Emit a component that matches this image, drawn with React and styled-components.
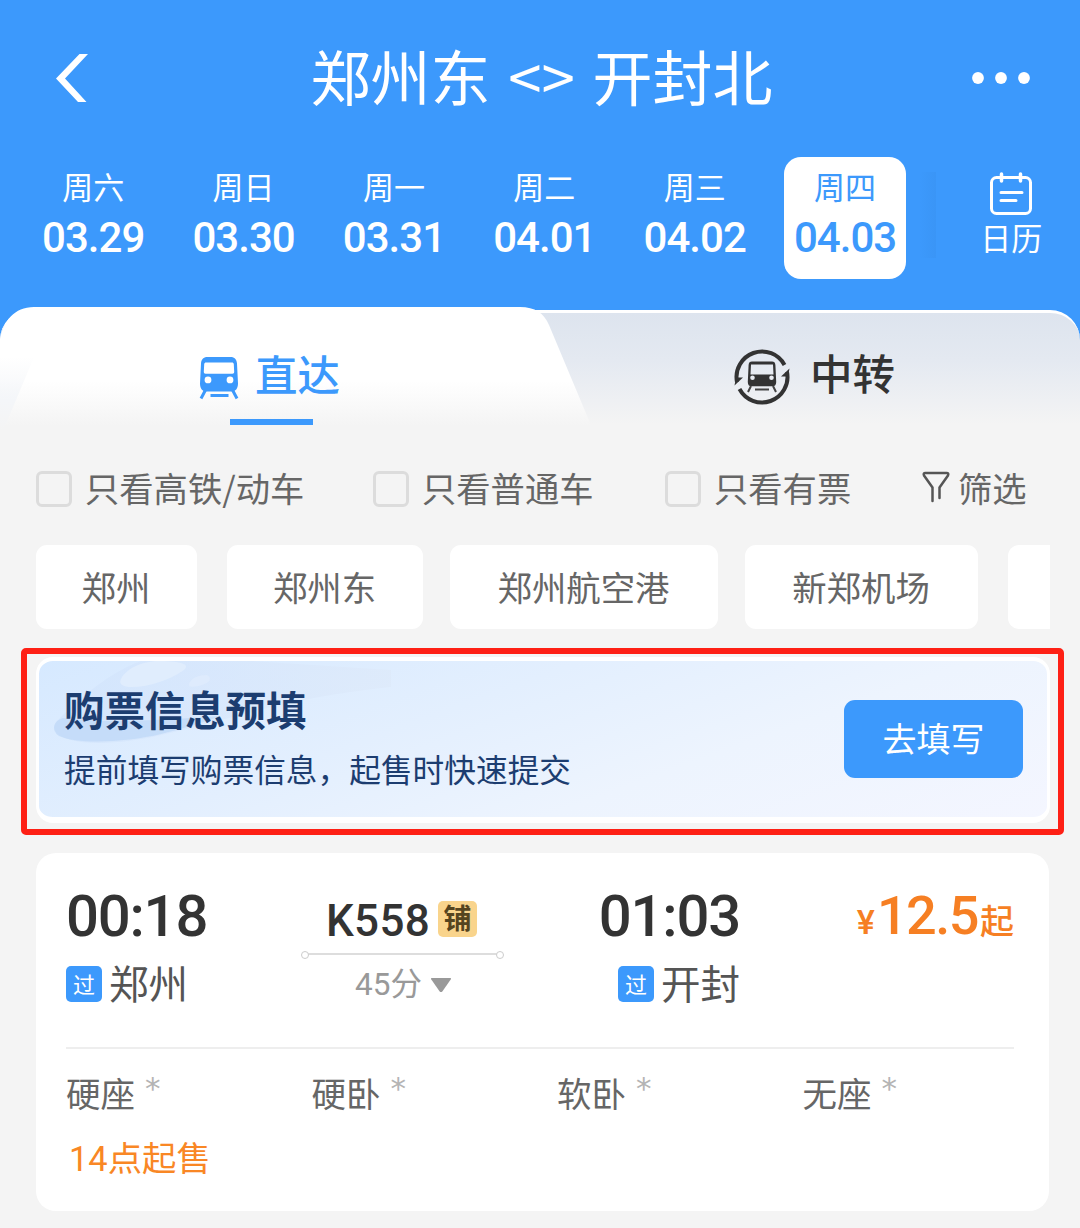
import React, { useState } from "react";
import styled, { createGlobalStyle } from "styled-components";

const days = [
  { week: "周六", date: "03.29" },
  { week: "周日", date: "03.30" },
  { week: "周一", date: "03.31" },
  { week: "周二", date: "04.01" },
  { week: "周三", date: "04.02" },
  { week: "周四", date: "04.03" },
];

const filters = [
  { label: "只看高铁/动车", width: 337 },
  { label: "只看普通车", width: 292 },
  { label: "只看有票", width: 257 },
];

const stations = [
  { name: "郑州", width: 161, gap: 30 },
  { name: "郑州东", width: 196, gap: 27 },
  { name: "郑州航空港", width: 268, gap: 27 },
  { name: "新郑机场", width: 233, gap: 30 },
  { name: "", width: 161, gap: 0 },
];

const seats = ["硬座", "硬卧", "软卧", "无座"];

function BackIcon() {
  return (
    <svg width="32" height="48" viewBox="0 0 32 48">
      <path d="M23.500 0H32L9 24.500 30.500 48H22L0 24.500z" fill="#fff" />
    </svg>
  );
}

function MoreIcon() {
  return (
    <svg width="60" height="14" viewBox="0 0 60 14" fill="#fff">
      <circle cx="7" cy="7" r="5.900" />
      <circle cx="30" cy="7" r="5.900" />
      <circle cx="53" cy="7" r="5.900" />
    </svg>
  );
}

function CalendarIcon() {
  return (
    <svg
      width="44"
      height="44"
      viewBox="0 0 44 44"
      fill="none"
      stroke="#fff"
      strokeWidth="3"
      strokeLinecap="round"
    >
      <path d="M7.500 5.500h29a5 5 0 0 1 5 5v26a5 5 0 0 1-5 5h-29a5 5 0 0 1-5-5v-26a5 5 0 0 1 5-5z" />
      <path d="M12.500 2v7M31.500 2v7" strokeWidth="3.500" />
      <path d="M12 20.500h21M12 28.500h15" />
    </svg>
  );
}

function TrainIcon() {
  return (
    <svg width="40" height="44" viewBox="0 0 40 44">
      <path
        fillRule="evenodd"
        fill="#3c99fc"
        d="M8.500 1h23c4.200 0 6.200 2.600 6.500 6.500l1 20c0 5-2.400 8-6.500 8h-25c-4.100 0-6.500-3-6.500-8l1-20C2.300 3.600 4.300 1 8.500 1zM7 6.500c-1 0-1.700.7-1.800 1.700l-.4 7.600c0 1.300.6 1.900 1.800 1.900h26.800c1.200 0 1.800-.6 1.800-1.900l-.4-7.600c-.1-1-.8-1.700-1.800-1.700zM9 20.500a3.400 3.400 0 1 0 0 6.800 3.400 3.400 0 0 0 0-6.800zm22 0a3.400 3.400 0 1 0 0 6.800 3.400 3.400 0 0 0 0-6.800z"
      />
      <path
        d="M6.500 34 2 42.500M33.500 34 38 42.500M11.500 39.500h18"
        fill="none"
        stroke="#3c99fc"
        strokeWidth="3"
      />
    </svg>
  );
}

function TransferIcon() {
  return (
    <svg width="56" height="56" viewBox="0 0 56 56">
      <g fill="none" stroke="#333" strokeWidth="4">
        <path d="M3 33A25.500 25.500 0 0 1 50.500 16" />
        <path d="M53 23A25.500 25.500 0 0 1 5.500 40" />
      </g>
      <path d="M.5 36.500 9 28.500H2zM55.500 19.500 47 27.500h7z" fill="#333" />
      <path
        fillRule="evenodd"
        fill="#333"
        d="M18 12.500h20c2.200 0 3.200 1.200 3.400 3.400l.8 17.200c0 2.800-1.200 4.200-3.500 4.200H17.300c-2.300 0-3.500-1.400-3.500-4.200l.8-17.200c.2-2.200 1.200-3.400 3.400-3.400zm-1 3L16.500 25.500h23L39 15.500zM18.500 26.500a2.300 2.300 0 1 0 0 4.600 2.300 2.300 0 0 0 0-4.600zm19 0a2.300 2.300 0 1 0 0 4.600 2.300 2.300 0 0 0 0-4.600z"
      />
      <path
        d="M17 37l-3 6M39 37l3 6M21 40.500h14"
        fill="none"
        stroke="#444"
        strokeWidth="2"
      />
    </svg>
  );
}

function FunnelIcon() {
  return (
    <svg
      width="28"
      height="32"
      viewBox="0 0 28 32"
      fill="none"
      stroke="#555"
      strokeWidth="2.500"
      strokeLinejoin="round"
      strokeLinecap="round"
    >
      <path d="M10.500 30V16.500L2 4.500C1.300 3 1.800 2 3.400 2h21.200c1.600 0 2.100 1 1.400 2.500L17.500 16.500V27" />
    </svg>
  );
}

// pale bullet train behind the banner title
function BannerTrain() {
  return (
    <svg width="360" height="90" viewBox="0 0 360 90">
      <defs>
        <linearGradient id="body" x1="0" y1="0" x2="1" y2="0">
          <stop offset="0" stopColor="#d0e3fb" />
          <stop offset="0.350" stopColor="#d5e5fc" />
          <stop offset="1" stopColor="#dde9f9" />
        </linearGradient>
      </defs>
      <path
        d="M16 60C30 46 62 14 100 0h110L350 9v17C250 36 190 58 120 74c-34 8-78 12-98 2-8-4-10-10-6-16z"
        fill="url(#body)"
        opacity="0.650"
      />
      <path
        d="M22 57c-10 3-12 12-4 18 20 9 68 6 102-2 24-6 40-11 60-18-60 4-110 8-158 2z"
        fill="#c1d9f8"
        opacity="0.800"
      />
      <path d="M80 18C86 6 104 0 118 0c24 0 34 4 22 11-12 8-34 16-52 15-8-1-10-4-8-8z" fill="#e0edfd" />
      <path d="M148 23c2-6 10-9 18-9 6 3 2 8-5 10s-14 3-13-1z" fill="#deebfd" />
    </svg>
  );
}

function DropIcon() {
  return (
    <svg width="22" height="16" viewBox="0 0 22 16">
      <path d="M2 1h18c1 0 1.300.7.700 1.600l-8.200 11.600c-1 1.200-2 1.200-3 0L1.300 2.600C.7 1.700 1 1 2 1z" fill="#999" />
    </svg>
  );
}

function App() {
  const [selected, setSelected] = useState(5);

  return (
    <Page>
      <GlobalStyle />
      <Header>
        <NavBar>
          <BackIcon />
          <Title>
            <span>郑州东</span>
            <Swap>&lt;&gt;</Swap>
            <span>开封北</span>
          </Title>
          <MoreIcon />
        </NavBar>
        <DateBar>
          {days.map((day, i) => (
            <DayCell
              key={day.date}
              $active={i === selected}
              onClick={() => setSelected(i)}
            >
              <Week>{day.week}</Week>
              <DateText>{day.date}</DateText>
            </DayCell>
          ))}
          <CalendarShade />
          <Calendar>
            <CalendarIcon />
            <Week>日历</Week>
          </Calendar>
        </DateBar>
      </Header>

      <Tabs>
        <DirectTab>
          <TrainIcon />
          <TabText $blue>直达</TabText>
        </DirectTab>
        <TransferTab>
          <TransferIcon />
          <TabText>中转</TabText>
        </TransferTab>
      </Tabs>

      <FilterRow>
        {filters.map((f) => (
          <Filter key={f.label} $width={f.width}>
            <Checkbox />
            {f.label}
          </Filter>
        ))}
        <FilterMore>
          <FunnelIcon />
          筛选
        </FilterMore>
      </FilterRow>

      <StationRow>
        {stations.map((s) => (
          <Station key={s.width + s.name} $width={s.width} $gap={s.gap}>
            {s.name}
          </Station>
        ))}
      </StationRow>

      <Highlight>
        <Banner>
          <BannerArt>
            <BannerTrain />
          </BannerArt>
          <BannerText>
            <h2>购票信息预填</h2>
            <p>提前填写购票信息，起售时快速提交</p>
          </BannerText>
          <FillButton>去填写</FillButton>
        </Banner>
      </Highlight>

      <Card>
        <Trip>
          <Stop>
            <Time>00:18</Time>
            <StopName>
              <PassTag>过</PassTag>
              郑州
            </StopName>
          </Stop>
          <Middle>
            <TrainNo>
              K558
              <BedTag>铺</BedTag>
            </TrainNo>
            <Track />
            <Duration>
              <span>45分</span>
              <DropIcon />
            </Duration>
          </Middle>
          <Stop $end>
            <Time>01:03</Time>
            <StopName>
              <PassTag>过</PassTag>
              开封
            </StopName>
          </Stop>
          <Price>
            <small>¥</small>
            <b>12.5</b>
            <em>起</em>
          </Price>
        </Trip>
        <Seats>
          {seats.map((seat) => (
            <Seat key={seat}>
              {seat}
              <span>*</span>
            </Seat>
          ))}
        </Seats>
        <SaleTime>14点起售</SaleTime>
      </Card>
    </Page>
  );
}

const GlobalStyle = createGlobalStyle`
  * {
    box-sizing: border-box;
  }
  body {
    margin: 0;
    background: #f4f4f4;
    font-family: Roboto, "Noto Sans CJK SC", sans-serif;
  }
  h2, p {
    margin: 0;
  }
  svg {
    display: block;
    flex: none;
  }
`;

const Page = styled.div`
  width: 1080px;
  height: 1228px;
  overflow: hidden;
  background: #f4f4f4;
`;

const Header = styled.div`
  height: 307px;
  background: #3c99fc;
`;

const NavBar = styled.div`
  display: flex;
  align-items: center;
  justify-content: space-between;
  height: 157px;
  padding: 0 49px 2px 56px;
`;

const Title = styled.div`
  display: flex;
  align-items: center;
  margin-right: -24px;
  padding-bottom: 5px;
  color: #fff;
  font-family: "Noto Sans CJK SC", sans-serif;
  font-size: 60px;
  line-height: 80px;
`;

const Swap = styled.span`
  width: 102px;
  text-align: center;
`;

const DateBar = styled.div`
  display: flex;
  padding-left: 18px;
`;

const DayCell = styled.div`
  display: flex;
  flex: none;
  flex-direction: column;
  align-items: center;
  width: 122px;
  height: 122px;
  margin: 0 14.200px;
  padding-top: 9px;
  border-radius: 17px;
  background: ${(props) => (props.$active ? "#fff" : "transparent")};
  color: ${(props) => (props.$active ? "#3c99fc" : "#fff")};
`;

const Week = styled.div`
  font-family: "Noto Sans CJK SC", sans-serif;
  font-size: 31px;
  line-height: 40px;
`;

const DateText = styled.div`
  margin-top: 7px;
  font-size: 42px;
  font-weight: 500;
  letter-spacing: -1px;
  line-height: 50px;
`;

const CalendarShade = styled.div`
  flex: none;
  width: 16px;
  height: 86px;
  margin-top: 15px;
  background: linear-gradient(90deg, #3c99fc, #3a95f6);
`;

const Calendar = styled.div`
  display: flex;
  flex: none;
  flex-direction: column;
  align-items: center;
  width: 150px;
  height: 90px;
  margin-top: 13px;
  padding-top: 2px;
  color: #fff;

  ${Week} {
    margin-top: 1px;
  }
`;

const Tabs = styled.div`
  display: flex;
  position: relative;
  height: 123px;
  background: linear-gradient(#3c99fc 40px, #f4f4f4 40px);

  &::before {
    content: "";
    position: absolute;
    inset: 3px 0 0 0;
    border-radius: 30px 30px 0 0;
    border-top: 3px solid #fff;
    background: linear-gradient(#dde4ee, #e4e9f1 40%, #f4f4f4 95%);
  }
  &::after {
    content: "";
    position: absolute;
    inset: 0 auto 0 0;
    width: 600px;
    background: linear-gradient(#fff 60%, #f4f4f4 97%);
    clip-path: path(
      "M0 32C4 14 14 0 34 0H520C535 0 544 6 549 18L593 123H0z"
    );
  }
`;

const Tab = styled.div`
  display: flex;
  align-items: center;
  position: relative;
  z-index: 1;
  height: 120px;
`;

const DirectTab = styled(Tab)`
  width: 542px;
  gap: 16px;
  padding: 22px 0 0 199px;

  &::before {
    content: "";
    position: absolute;
    left: 0;
    top: 50px;
    width: 34px;
    height: 73px;
    background: linear-gradient(transparent, #f4f6f9 60%, #f4f4f4);
    clip-path: polygon(0 0, 100% 0, 10% 100%, 0 100%);
  }
  &::after {
    content: "";
    position: absolute;
    left: 230px;
    bottom: 2px;
    width: 83px;
    height: 6px;
    background: #3c99fc;
  }
`;

const TransferTab = styled(Tab)`
  gap: 20px;
  padding: 19px 0 0 192px;
`;

const TabText = styled.div`
  padding-bottom: 10px;
  color: ${(props) => (props.$blue ? "#3c99fc" : "#333")};
  font-family: "Noto Sans CJK SC", sans-serif;
  font-size: 42.500px;
  font-weight: 500;
  line-height: 50px;
`;

const FilterRow = styled.div`
  display: flex;
  align-items: center;
  height: 115px;
  padding: 0 0 0 36px;
  color: #666;
  font-family: "Noto Sans CJK SC", sans-serif;
  font-size: 34.300px;
  white-space: nowrap;
`;

const Filter = styled.div`
  display: flex;
  flex: none;
  align-items: center;
  gap: 13px;
  width: ${(props) => props.$width}px;
  height: 50px;
  line-height: 45px;
`;

const Checkbox = styled.span`
  flex: none;
  width: 36px;
  height: 36px;
  margin-top: 2px;
  border: 3px solid #dcdcdc;
  border-radius: 6px;
`;

const FilterMore = styled.div`
  display: flex;
  align-items: center;
  gap: 8px;
  padding-bottom: 1px;
  line-height: 45px;
`;

const StationRow = styled.div`
  display: flex;
  height: 84px;
  margin: 0 30px 0 36px;
  overflow: hidden;
`;

const Station = styled.div`
  flex: none;
  width: ${(props) => props.$width}px;
  height: 84px;
  margin-right: ${(props) => props.$gap}px;
  padding-right: 1px;
  border-radius: 11px;
  background: #fff;
  color: #666;
  font-family: "Noto Sans CJK SC", sans-serif;
  font-size: 34.400px;
  line-height: 82px;
  text-align: center;
`;

const Highlight = styled.div`
  width: 1043px;
  height: 187px;
  margin: 19px 0 0 21px;
  padding: 3px 8px 0 9px;
  border: 6px solid #fe2015;
  border-radius: 5px;
`;

const Banner = styled.div`
  display: flex;
  align-items: center;
  justify-content: space-between;
  position: relative;
  height: 166px;
  padding: 0 24px 0 25px;
  border: solid #fff;
  border-width: 4px 3px 6px 3px;
  border-radius: 17px;
  background: linear-gradient(
    160deg,
    #d6e9ff 0%,
    #e3effe 38%,
    #edf4fe 65%,
    #f4f6ff 100%
  );
`;

const BannerArt = styled.div`
  position: absolute;
  left: 2px;
  top: 0;
`;

const BannerText = styled.div`
  position: relative;
  padding-bottom: 2px;
  color: #1c3d70;
  font-family: "Noto Sans CJK SC", sans-serif;

  h2 {
    font-size: 40.400px;
    font-weight: 700;
    line-height: 60px;
  }
  p {
    margin-top: -1px;
    font-size: 31.700px;
    line-height: 60px;
  }
`;

const FillButton = styled.div`
  width: 179px;
  height: 78px;
  border-radius: 11px;
  background: #3c99fc;
  color: #fff;
  font-family: "Noto Sans CJK SC", sans-serif;
  font-size: 34px;
  line-height: 75px;
  text-align: center;
`;

const Card = styled.div`
  height: 358px;
  margin: 18px 31px 0 36px;
  padding: 0 35px 0 30px;
  border-radius: 20px;
  background: #fff;
`;

const Trip = styled.div`
  display: flex;
  height: 196px;
  padding-top: 29px;
  border-bottom: 2px solid #eee;
`;

const Stop = styled.div`
  display: flex;
  flex: none;
  flex-direction: column;
  align-items: ${(props) => (props.$end ? "flex-end" : "flex-start")};
  width: ${(props) => (props.$end ? 238 : 237)}px;
`;

const Time = styled.div`
  color: #333;
  font-size: 58px;
  font-weight: 500;
  letter-spacing: -1.200px;
  line-height: 68px;
`;

const StopName = styled.div`
  display: flex;
  align-items: center;
  gap: 7px;
  margin-top: 6px;
  color: #555;
  font-family: "Noto Sans CJK SC", sans-serif;
  font-size: 39.500px;
  line-height: 52px;
`;

const PassTag = styled.span`
  width: 36px;
  height: 36px;
  margin-top: 3px;
  border-radius: 5px;
  background: #3c99fc;
  color: #fff;
  font-size: 22px;
  line-height: 34px;
  text-align: center;
`;

const Middle = styled.div`
  flex: none;
  width: 199px;
  padding-top: 10px;
`;

const TrainNo = styled.div`
  display: flex;
  align-items: center;
  gap: 8px;
  height: 58px;
  padding-left: 23px;
  color: #333;
  font-size: 44px;
  font-weight: 500;
  letter-spacing: 0.300px;
`;

const BedTag = styled.span`
  width: 39px;
  height: 36px;
  margin-bottom: 5px;
  border-radius: 5px;
  background: #f9d48c;
  color: #55441f;
  font-family: "Noto Sans CJK SC", sans-serif;
  font-size: 28px;
  font-weight: 700;
  line-height: 33px;
  text-align: center;
`;

const Track = styled.div`
  position: relative;
  height: 2px;
  margin: 3px 3px 0;
  background: #ddd;

  &::before,
  &::after {
    content: "";
    position: absolute;
    top: -2px;
    width: 6px;
    height: 6px;
    border: 1px solid #ccc;
    border-radius: 50%;
    background: #fff;
  }
  &::before {
    left: -5px;
  }
  &::after {
    right: -5px;
  }
`;

const Duration = styled.div`
  display: flex;
  align-items: center;
  gap: 8px;
  margin-top: 7px;
  padding-left: 52px;
  color: #999;
  font-size: 31.500px;
  line-height: 46px;
`;

const Price = styled.div`
  display: flex;
  align-items: baseline;
  justify-content: flex-end;
  flex: 1;
  height: 70px;
  color: #f67f23;
  font-weight: 500;
  line-height: 68px;

  small {
    margin-right: 2px;
    font-size: 34px;
  }
  b {
    font-size: 54px;
    font-weight: 500;
    letter-spacing: -1.500px;
    margin-right: 2px;
  }
  em {
    font-size: 34px;
    font-style: normal;
  }
`;

const Seats = styled.div`
  display: flex;
  padding-top: 18px;
`;

const Seat = styled.div`
  display: flex;
  flex: none;
  width: 245.500px;
  color: #666;
  font-family: "Noto Sans CJK SC", sans-serif;
  font-size: 34.500px;
  line-height: 50px;

  span {
    margin: -4px 0 0 10px;
    color: #b4b4b4;
    font-family: "DejaVu Sans", sans-serif;
    font-size: 31px;
  }
`;

const SaleTime = styled.div`
  margin-top: 16px;
  padding-left: 3px;
  color: #f98725;
  font-size: 34.400px;
  line-height: 52px;
`;

export default App;
